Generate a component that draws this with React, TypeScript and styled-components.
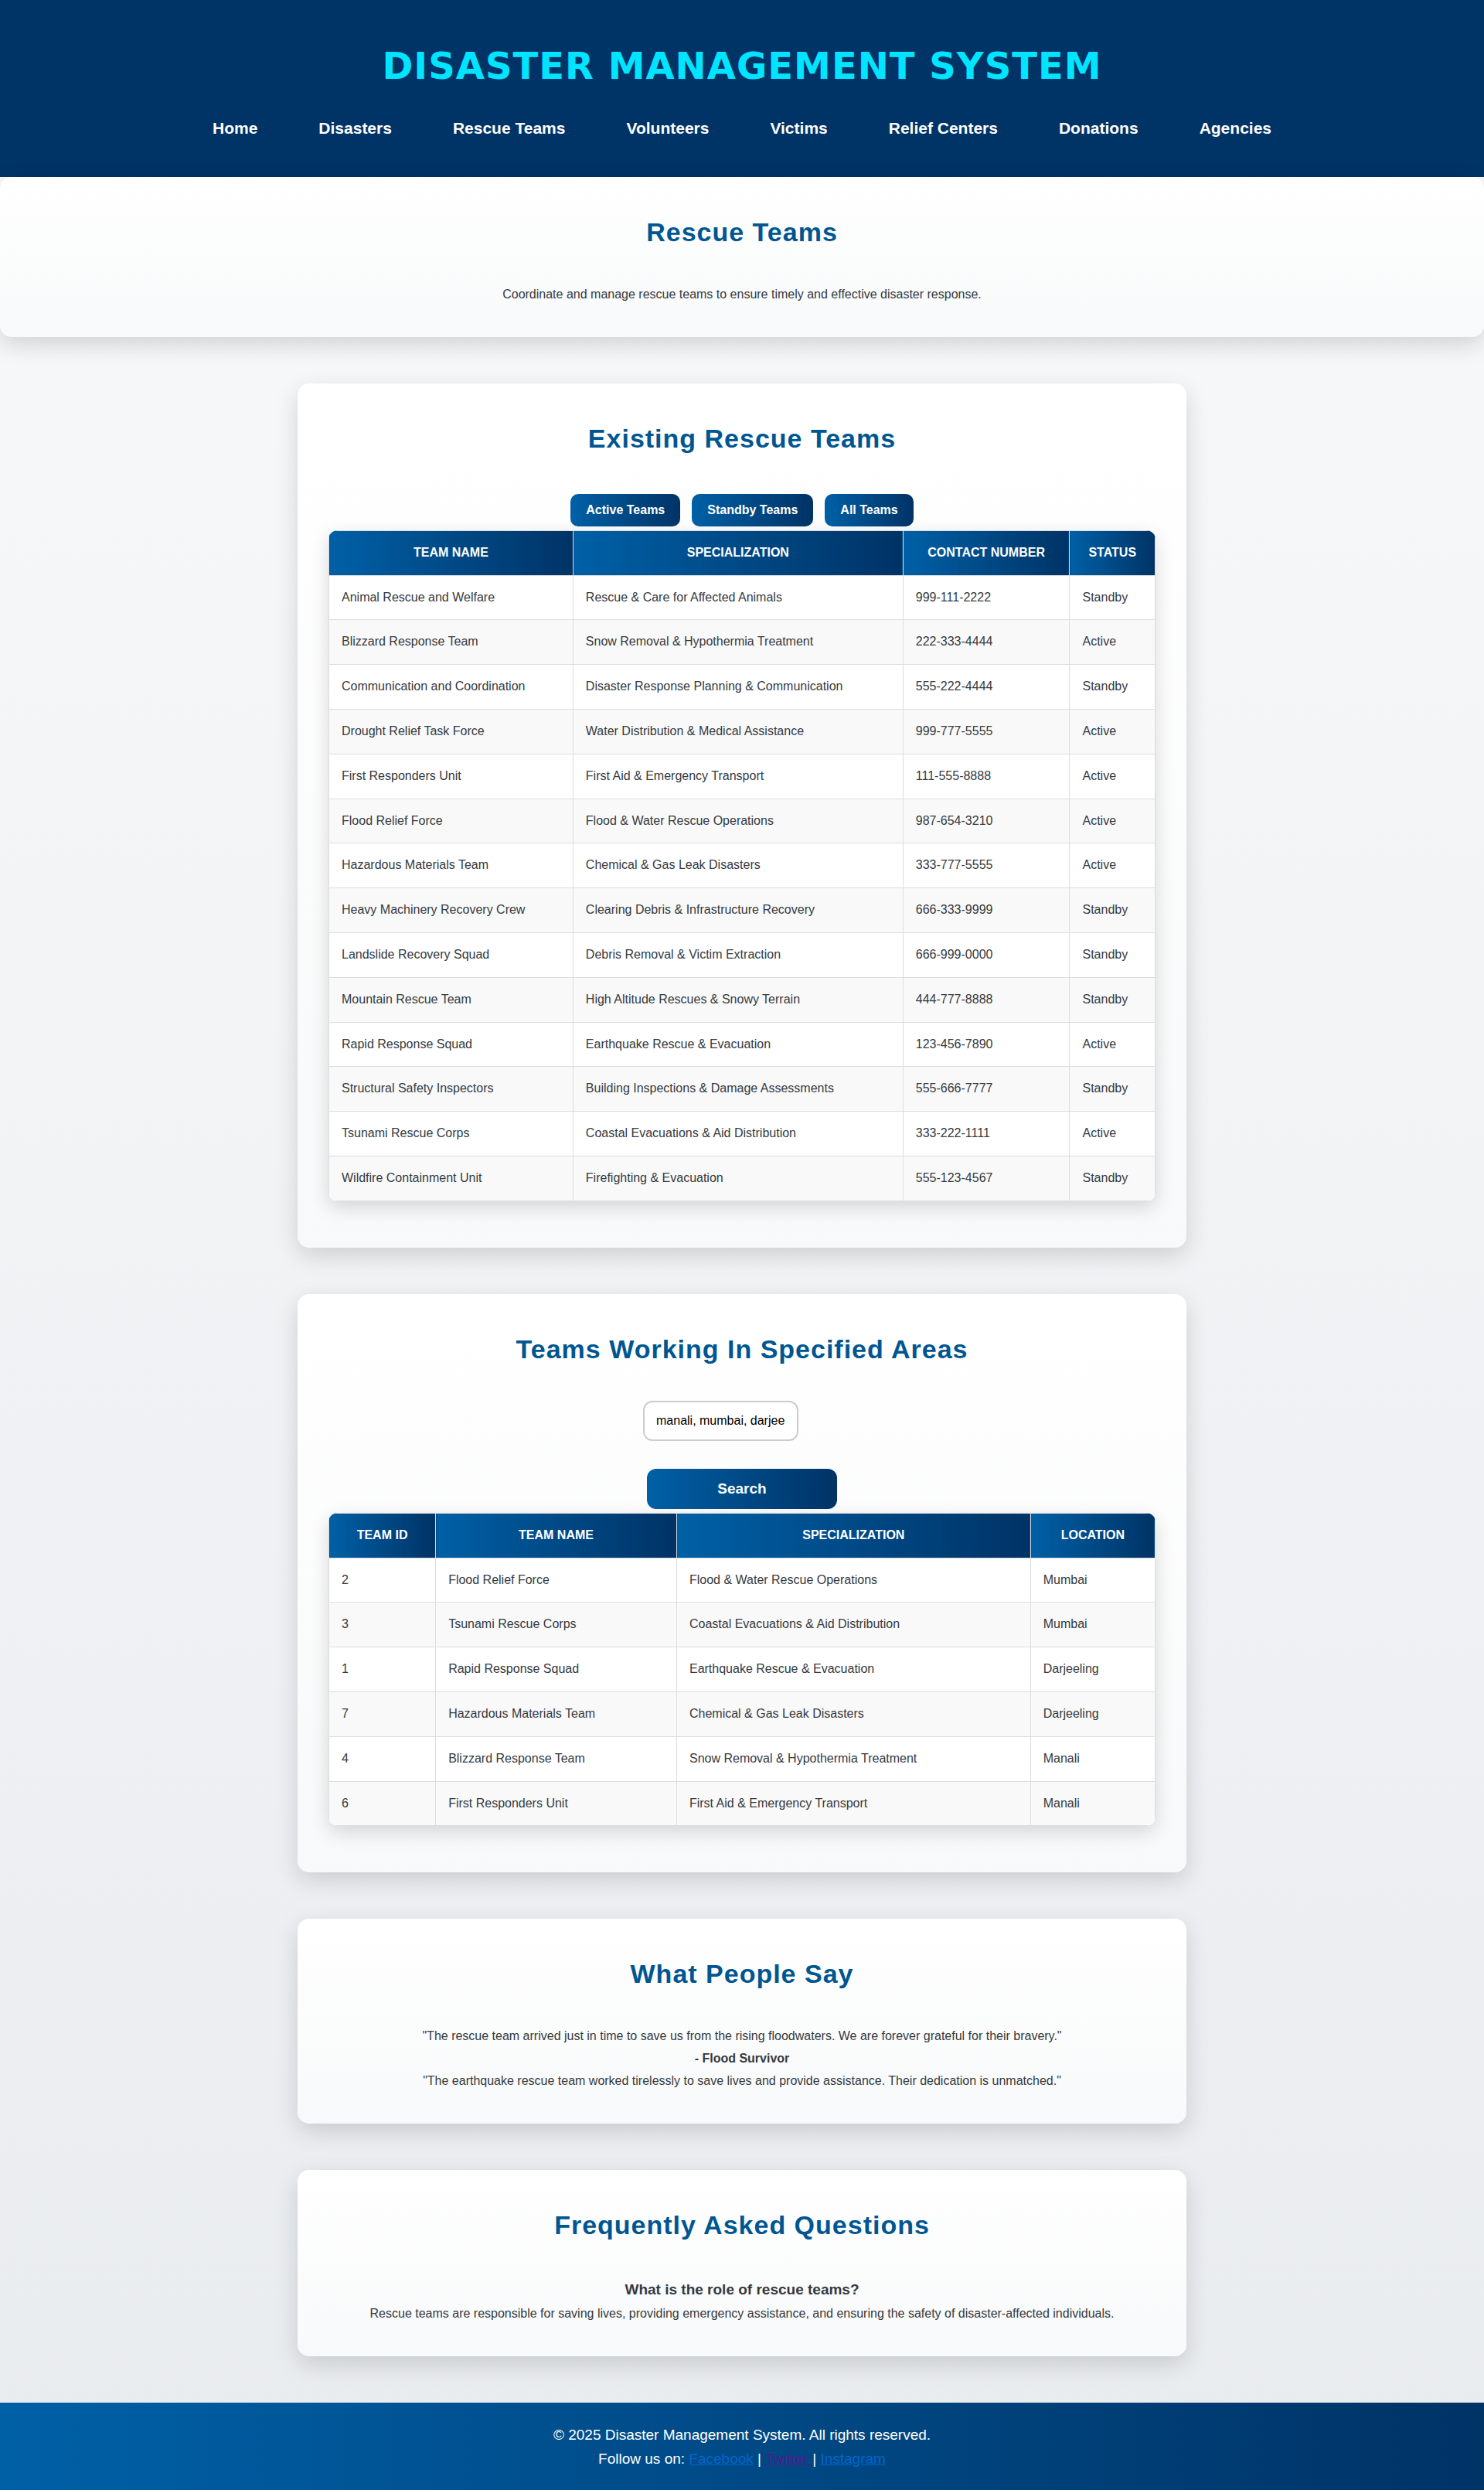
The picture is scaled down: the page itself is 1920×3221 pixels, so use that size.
import { useState } from "react";
import styled, { createGlobalStyle } from "styled-components";

const GlobalStyle = createGlobalStyle`
  * {
    margin: 0;
    padding: 0;
    box-sizing: border-box;
  }
  body {
    font-family: "Liberation Sans", Arial, sans-serif;
    font-size: 16px;
    line-height: 1.8;
    color: #343a40;
    background: linear-gradient(to bottom, #f8f9fa, #e9ecef);
  }
`;

const blueGradient = "linear-gradient(to right, #0060a6, #003366)";

const Header = styled.header`
  padding: 40px 20px 45px;
  background: #003366;
  color: #fff;
  text-align: center;
`;

const SiteTitle = styled.h1`
  margin-bottom: 18px;
  font-family: Verdana, "DejaVu Sans", sans-serif;
  font-size: 48px;
  line-height: 90px;
  letter-spacing: 1px;
  text-transform: uppercase;
  color: #00e5ff;
`;

const NavList = styled.ul`
  display: flex;
  flex-wrap: wrap;
  justify-content: center;
  gap: 0 79px;
  font-size: 21px;
  line-height: 36px;
  list-style: none;
`;

const NavLink = styled.a`
  font-weight: bold;
  color: #fff;
  text-decoration: none;
`;

const Panel = styled.section`
  padding: 40px;
  background: linear-gradient(to bottom, #ffffff, #f8f9fa);
  border-radius: 15px;
  box-shadow: 0 10px 30px rgba(0, 0, 0, 0.15);
  text-align: center;
`;

const Card = styled(Panel)`
  max-width: 1150px;
  margin: 60px auto;
`;

const Heading = styled.h2`
  margin-bottom: 35px;
  font-size: 34px;
  line-height: 63px;
  letter-spacing: 1px;
  color: #005691;
`;

const Question = styled.h3`
  font-size: 19px;
`;

const FilterBar = styled.div`
  display: flex;
  justify-content: center;
  gap: 15px;
  padding: 5px 0;
`;

const Button = styled.button`
  height: 42px;
  padding: 0 20px;
  border: none;
  border-radius: 10px;
  background: ${blueGradient};
  color: #fff;
  font: bold 16px "Liberation Sans", Arial, sans-serif;
  cursor: pointer;
`;

const SearchButton = styled(Button)`
  height: 52px;
  margin: 0 5px;
  border-radius: 12px;
  font-size: 19px;
`;

const SearchForm = styled.form`
  display: flex;
  flex-direction: column;
  gap: 36px;
  width: 256px;
  margin: 0 auto;
  padding-bottom: 5px;
`;

const SearchInput = styled.input`
  align-self: flex-start;
  width: 201px;
  height: 52px;
  padding: 0 15px;
  border: 2px solid #ccc;
  border-radius: 12px;
  background: #fff;
  font: 16px "Liberation Sans", Arial, sans-serif;
  color: #000;
`;

const DataTable = styled.table`
  width: 100%;
  margin-bottom: 20px;
  border-collapse: collapse;
  border-radius: 12px;
  overflow: hidden;
  background: #fff;
  box-shadow: 0 8px 25px rgba(0, 0, 0, 0.15);

  th,
  td {
    padding: 14px 16px;
    border: 1px solid #ddd;
  }
  th {
    background: ${blueGradient};
    color: #fff;
    text-transform: uppercase;
  }
  td {
    text-align: left;
  }
  tbody tr:nth-child(even) {
    background: #f9f9f9;
  }
`;

const Footer = styled.footer`
  padding: 26px 25px;
  background: ${blueGradient};
  color: #fff;
  font-size: 19px;
  line-height: 31px;
  text-align: center;
`;

const SocialLink = styled.a<{ $seen?: boolean }>`
  color: ${(p) => (p.$seen ? "#551a8b" : "#0066cc")};
  text-decoration: underline;
`;

const navItems = [
  "Home",
  "Disasters",
  "Rescue Teams",
  "Volunteers",
  "Victims",
  "Relief Centers",
  "Donations",
  "Agencies",
];

const teamColumns = ["Team Name", "Specialization", "Contact Number", "Status"];

const teams = [
  ["Animal Rescue and Welfare", "Rescue & Care for Affected Animals", "999-111-2222", "Standby"],
  ["Blizzard Response Team", "Snow Removal & Hypothermia Treatment", "222-333-4444", "Active"],
  ["Communication and Coordination", "Disaster Response Planning & Communication", "555-222-4444", "Standby"],
  ["Drought Relief Task Force", "Water Distribution & Medical Assistance", "999-777-5555", "Active"],
  ["First Responders Unit", "First Aid & Emergency Transport", "111-555-8888", "Active"],
  ["Flood Relief Force", "Flood & Water Rescue Operations", "987-654-3210", "Active"],
  ["Hazardous Materials Team", "Chemical & Gas Leak Disasters", "333-777-5555", "Active"],
  ["Heavy Machinery Recovery Crew", "Clearing Debris & Infrastructure Recovery", "666-333-9999", "Standby"],
  ["Landslide Recovery Squad", "Debris Removal & Victim Extraction", "666-999-0000", "Standby"],
  ["Mountain Rescue Team", "High Altitude Rescues & Snowy Terrain", "444-777-8888", "Standby"],
  ["Rapid Response Squad", "Earthquake Rescue & Evacuation", "123-456-7890", "Active"],
  ["Structural Safety Inspectors", "Building Inspections & Damage Assessments", "555-666-7777", "Standby"],
  ["Tsunami Rescue Corps", "Coastal Evacuations & Aid Distribution", "333-222-1111", "Active"],
  ["Wildfire Containment Unit", "Firefighting & Evacuation", "555-123-4567", "Standby"],
];

const areaColumns = ["Team ID", "Team Name", "Specialization", "Location"];

const areaTeams = [
  ["2", "Flood Relief Force", "Flood & Water Rescue Operations", "Mumbai"],
  ["3", "Tsunami Rescue Corps", "Coastal Evacuations & Aid Distribution", "Mumbai"],
  ["1", "Rapid Response Squad", "Earthquake Rescue & Evacuation", "Darjeeling"],
  ["7", "Hazardous Materials Team", "Chemical & Gas Leak Disasters", "Darjeeling"],
  ["4", "Blizzard Response Team", "Snow Removal & Hypothermia Treatment", "Manali"],
  ["6", "First Responders Unit", "First Aid & Emergency Transport", "Manali"],
];

function Table({ columns, rows }: { columns: string[]; rows: string[][] }) {
  return (
    <DataTable>
      <thead>
        <tr>
          {columns.map((c) => (
            <th key={c} scope="col">{c}</th>
          ))}
        </tr>
      </thead>
      <tbody>
        {rows.map((row) => (
          <tr key={row[0]}>
            {row.map((cell, i) => (
              <td key={i}>{cell}</td>
            ))}
          </tr>
        ))}
      </tbody>
    </DataTable>
  );
}

export default function App() {
  const [status, setStatus] = useState("All");
  const [areas, setAreas] = useState("manali, mumbai, darjeeling");
  const shownTeams = status === "All" ? teams : teams.filter((t) => t[3] === status);

  return (
    <>
      <GlobalStyle />
      <Header>
        <SiteTitle>Disaster Management System</SiteTitle>
        <nav>
          <NavList>
            {navItems.map((item) => (
              <li key={item}>
                <NavLink href="#">{item}</NavLink>
              </li>
            ))}
          </NavList>
        </nav>
      </Header>

      <main>
        <Panel>
          <Heading>Rescue Teams</Heading>
          <p>Coordinate and manage rescue teams to ensure timely and effective disaster response.</p>
        </Panel>

        <Card>
          <Heading>Existing Rescue Teams</Heading>
          <FilterBar>
            {["Active", "Standby", "All"].map((s) => (
              <Button key={s} type="button" onClick={() => setStatus(s)}>
                {s} Teams
              </Button>
            ))}
          </FilterBar>
          <Table columns={teamColumns} rows={shownTeams} />
        </Card>

        <Card>
          <Heading>Teams Working In Specified Areas</Heading>
          <SearchForm onSubmit={(e) => e.preventDefault()}>
            <SearchInput
              type="text"
              aria-label="Areas"
              value={areas}
              onChange={(e) => setAreas(e.target.value)}
            />
            <SearchButton type="submit">Search</SearchButton>
          </SearchForm>
          <Table columns={areaColumns} rows={areaTeams} />
        </Card>

        <Card>
          <Heading>What People Say</Heading>
          <p>"The rescue team arrived just in time to save us from the rising floodwaters. We are forever grateful for their bravery."</p>
          <p>
            <strong>- Flood Survivor</strong>
          </p>
          <p>"The earthquake rescue team worked tirelessly to save lives and provide assistance. Their dedication is unmatched."</p>
        </Card>

        <Card>
          <Heading>Frequently Asked Questions</Heading>
          <Question>What is the role of rescue teams?</Question>
          <p>
            Rescue teams are responsible for saving lives, providing emergency assistance, and ensuring the safety of
            disaster-affected individuals.
          </p>
        </Card>
      </main>

      <Footer>
        <p>© 2025 Disaster Management System. All rights reserved.</p>
        <p>
          Follow us on: <SocialLink href="#">Facebook</SocialLink> |{" "}
          <SocialLink href="#" $seen>Twitter</SocialLink> | <SocialLink href="#">Instagram</SocialLink>
        </p>
      </Footer>
    </>
  );
}
